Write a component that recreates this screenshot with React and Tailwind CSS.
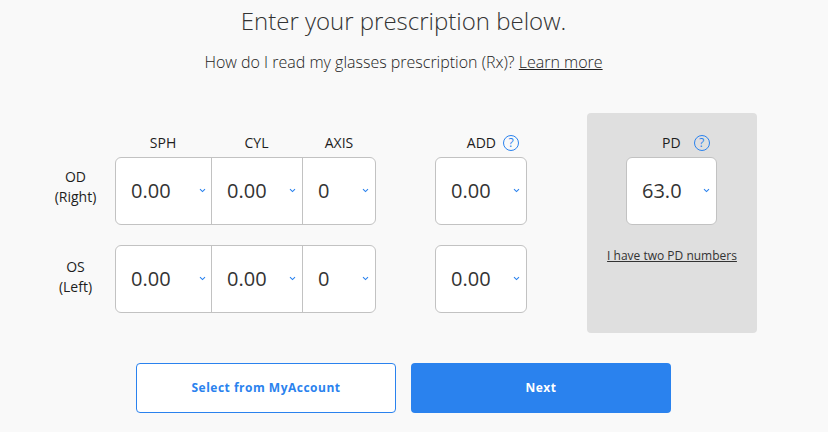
function Chevron() {
  return (
    <svg width="7" height="5" viewBox="0 0 7 5" fill="none" className="mb-[2px] shrink-0">
      <path d="M1 1.2 L3.5 3.6 L6 1.2" stroke="#2a82ee" strokeWidth="1.1" />
    </svg>
  );
}

function Help() {
  return (
    <span className="flex h-4 w-4 shrink-0 items-center justify-center rounded-full border border-[#2a82ee] text-[12px] leading-none text-[#2a82ee]">
      ?
    </span>
  );
}

function Cell({ value, width, pr, last }) {
  return (
    <div className={`${width} ${pr} flex h-full items-center justify-between pl-[15px] ${last ? "" : "border-r border-[#c2c2c2]"}`}>
      <span className="text-[20px] text-[#333333]">{value}</span>
      <Chevron />
    </div>
  );
}

function Group() {
  return (
    <div className="flex h-[68px] w-[261px] items-center overflow-hidden rounded-[6px] border border-[#c2c2c2] bg-white">
      <Cell value="0.00" width="w-[96px]" pr="pr-[5px]" />
      <Cell value="0.00" width="w-[91px]" pr="pr-[6px]" />
      <Cell value="0" width="w-[72px]" pr="pr-[6px]" last />
    </div>
  );
}

function Single({ value, width }) {
  return (
    <div className={`${width} flex h-[68px] items-center justify-between rounded-[6px] border border-[#c2c2c2] bg-white pl-[15px] pr-[6px]`}>
      <span className="text-[20px] text-[#333333]">{value}</span>
      <Chevron />
    </div>
  );
}

function RowLabel({ a, b, pb }) {
  return (
    <div className={`${pb} flex h-[68px] w-[83px] flex-col items-center justify-center pl-[4px] text-[14px] leading-[20px] text-[#1d1d1d]`}>
      <span>{a}</span>
      <span>{b}</span>
    </div>
  );
}

export default function App() {
  return (
    <div className="h-[432px] w-[828px] overflow-hidden bg-[#f9f9f9] font-['Open_Sans',sans-serif]">
      <div className="flex w-[807px] flex-col items-center">
        <h1 className="mt-[4px] text-[24px] font-light leading-[33px] text-[#333333]">Enter your prescription below.</h1>
        <p className="mt-[14px] text-[16px] font-light leading-[22px] text-[#222222]">
          How do I read my glasses prescription (Rx)? <a className="underline">Learn more</a>
        </p>
      </div>

      <div className="mt-[40px] flex pl-[32px]">
        <div className="flex flex-col pt-[44px]">
          <RowLabel a="OD" b="(Right)" pb="pb-[8px]" />
          <div className="mt-[20px]"><RowLabel a="OS" b="(Left)" pb="pb-[4px]" /></div>
        </div>

        <div className="flex flex-col">
          <div className="flex h-[44px] items-end pb-[5px] text-[14px] leading-[19px] text-[#1d1d1d]">
            <span className="w-[96px] text-center">SPH</span>
            <span className="w-[91px] text-center">CYL</span>
            <span className="w-[74px] text-center">AXIS</span>
          </div>
          <Group />
          <div className="mt-[20px]"><Group /></div>
        </div>

        <div className="ml-[59px] flex flex-col">
          <div className="flex h-[44px] items-end justify-end gap-[7px] pb-[5px] pr-[8px] text-[14px] leading-[19px] text-[#1d1d1d]">
            <span>ADD</span>
            <span className="mb-[1px]"><Help /></span>
          </div>
          <Single value="0.00" width="w-[92px]" />
          <div className="mt-[20px]"><Single value="0.00" width="w-[92px]" /></div>
        </div>

        <div className="ml-[60px] flex h-[220px] w-[170px] flex-col items-center rounded-[4px] bg-[#dfdfdf]">
          <div className="flex h-[44px] w-full items-end pb-[5px] pl-[75px] text-[14px] leading-[19px] text-[#1d1d1d]">
            <span>PD</span>
            <span className="mb-[1px] ml-[13px]"><Help /></span>
          </div>
          <div className="ml-[39px] w-[91px] self-start"><Single value="63.0" width="w-[91px]" /></div>
          <a className="mt-[22px] text-[12px] leading-[17px] text-[#333333] underline">I have two PD numbers</a>
        </div>
      </div>

      <div className="mt-[30px] flex justify-center gap-[15px] pr-[21px]">
        <button className="h-[50px] w-[260px] rounded-[4px] border border-[#2a82ee] bg-white text-[12px] font-bold tracking-[0.5px] text-[#2a82ee]">
          Select from MyAccount
        </button>
        <button className="h-[50px] w-[260px] rounded-[4px] bg-[#2a82ee] text-[12px] font-bold tracking-[0.5px] text-white">
          Next
        </button>
      </div>
    </div>
  );
}
